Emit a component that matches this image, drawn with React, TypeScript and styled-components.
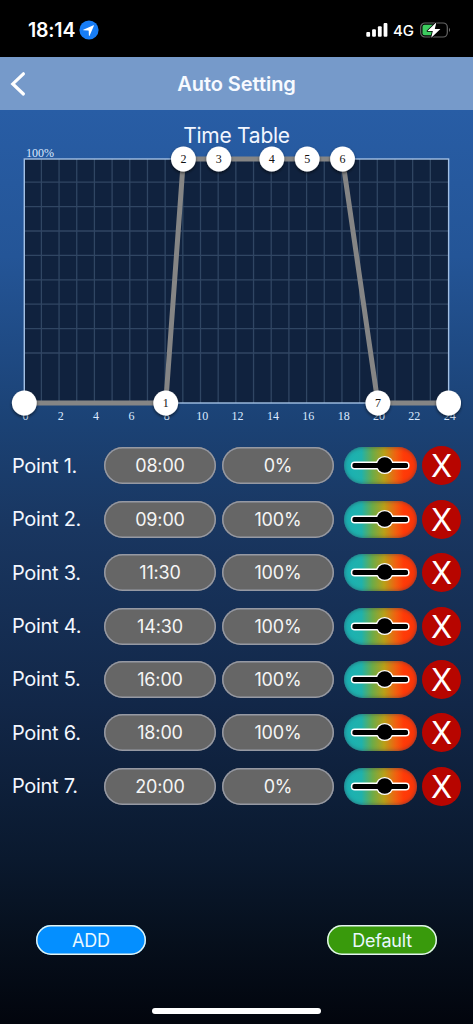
import React from "react";
import styled, { createGlobalStyle } from "styled-components";

const GlobalStyle = createGlobalStyle`
  * { box-sizing: border-box; }
  body { margin: 0; background: #000; }
`;

const Screen = styled.div`
  width: 473px;
  height: 1024px;
  overflow: hidden;
  display: flex;
  flex-direction: column;
  color: #fff;
  font-family: Inter, "Liberation Sans", sans-serif;
`;

const StatusBar = styled.header`
  height: 57px;
  flex: none;
  padding: 3px 22px 0 28px;
  display: flex;
  align-items: center;
  background: #000;
`;

const Clock = styled.span`
  width: 51px;
  font-size: 19.5px;
  font-weight: 600;
  letter-spacing: -0.2px;
  white-space: nowrap;
`;

const StatusIcons = styled.div`
  margin-left: auto;
  display: flex;
  align-items: center;
`;

const Network = styled.span`
  width: 27px;
  margin-left: 5px;
  font-size: 15px;
  font-weight: 500;
  letter-spacing: -0.1px;
`;

const NavBar = styled.nav`
  height: 53px;
  flex: none;
  padding: 0 10px;
  display: grid;
  grid-template-columns: 20px 1fr 20px;
  align-items: center;
  background: #769aca;
`;

const NavTitle = styled.h1`
  margin: 0;
  text-align: center;
  font-size: 20px;
  line-height: 24px;
  font-weight: 600;
  letter-spacing: -0.05px;
  color: #f7faff;
`;

const Content = styled.main`
  flex: 1;
  display: flex;
  flex-direction: column;
  background: linear-gradient(#285da5 0%, #245597 16%, #1b4275 34%, #193660 46%, #122748 65%, #0a192e 82%, #060f1c 91%, #02050d 100%);
`;

const ChartTitle = styled.h2`
  margin: 12px 0 0;
  height: 28px;
  text-align: center;
  font-size: 21px;
  line-height: 28px;
  font-weight: 400;
  letter-spacing: -0.25px;
  color: #f2f6ff;
`;

const Chart = styled.svg`
  display: block;
  flex: none;
  width: 473px;
  height: 281px;
  margin-top: -6px;
  overflow: visible;
  font-family: "Liberation Serif", serif;
`;

const PointList = styled.ul`
  margin: 0;
  padding: 14.2px 12px 0;
  list-style: none;
`;

const PointRow = styled.li`
  height: 53.4px;
  display: grid;
  grid-template-columns: 92px 112px 6px 112px 10px 73px 5px 39px;
  align-items: center;
`;

const PointName = styled.span`
  font-size: 20px;
  letter-spacing: -0.3px;
  color: #f3f7ff;
`;

const ValuePill = styled.button<{ $column: number }>`
  grid-column: ${(p) => p.$column};
  height: 37px;
  padding: 0;
  border: 0;
  box-shadow: inset 0 0 0 1.5px #9699a3;
  border-radius: 19px;
  background: #666;
  color: #f5f5f5;
  font: 400 18px/37px Inter, "Liberation Sans", sans-serif;
  letter-spacing: -0.15px;
`;

const ColorButton = styled.button`
  grid-column: 6;
  height: 37px;
  padding: 0;
  border: 0;
  border-radius: 19px;
  background: linear-gradient(90deg, #1ab1b5 0%, #20b2ab 24%, #6cab48 39%, #b9a018 55%, #f16010 71%, #ff3b08 82%, #fa3508 100%);
  box-shadow: inset 0 0 4px rgba(50, 60, 80, 0.65);
  svg { display: block; }
`;

const DeleteButton = styled.button`
  grid-column: 8;
  width: 39px;
  height: 39px;
  padding: 0;
  border: 0;
  border-radius: 50%;
  background: #b70500;
  color: #fff;
  font: 400 31px/39px Inter, "Liberation Sans", sans-serif;
  text-align: center;
`;

const Footer = styled.footer`
  margin-top: auto;
  padding: 0 36px;
  display: flex;
  justify-content: space-between;
`;

const ActionButton = styled.button<{ $tone: string }>`
  width: 110px;
  height: 30px;
  padding: 0;
  border: 0;
  box-shadow: inset 0 0 0 1.5px #e4f3f0;
  border-radius: 15px;
  background: ${(p) => p.$tone};
  color: #e9f8ff;
  font: 400 18px/31px Inter, "Liberation Sans", sans-serif;
  letter-spacing: -0.2px;
`;

const HomeIndicator = styled.div`
  width: 169px;
  height: 6.5px;
  margin: 52.5px auto 10px;
  flex: none;
  border-radius: 4px;
  background: #fff;
`;

const points = [
  { hour: 8, time: "08:00", level: 0 },
  { hour: 9, time: "09:00", level: 100 },
  { hour: 11, time: "11:30", level: 100 },
  { hour: 14, time: "14:30", level: 100 },
  { hour: 16, time: "16:00", level: 100 },
  { hour: 18, time: "18:00", level: 100 },
  { hour: 20, time: "20:00", level: 0 },
];

const LEFT = 24.3;
const TOP = 15;
const HEIGHT = 244;
const HOUR = 17.68;
const xAt = (hour: number) => LEFT + hour * HOUR;
const yAt = (level: number) => TOP + HEIGHT * (1 - level / 100);

function TimeChart() {
  const nodes = [
    { hour: 0, level: 0, label: "" },
    ...points.map((p, i) => ({ hour: p.hour, level: p.level, label: String(i + 1) })),
    { hour: 24, level: 0, label: "" },
  ];
  return (
    <Chart viewBox="0 0 473 281">
      <defs>
        <filter id="nodeShadow" x="-30%" y="-30%" width="160%" height="170%">
          <feDropShadow dx="0" dy="1.5" stdDeviation="1.8" floodColor="#000" floodOpacity="0.6" />
        </filter>
      </defs>
      <rect x={LEFT} y={TOP} width={HOUR * 24} height={HEIGHT} fill="#10223e" />
      <g stroke="#304663" strokeWidth="1.3">
        {Array.from({ length: 23 }, (_, i) => (
          <line key={i} x1={xAt(i + 1) - 0.6} x2={xAt(i + 1) - 0.6} y1={TOP} y2={TOP + HEIGHT} />
        ))}
        {Array.from({ length: 8 }, (_, i) => (
          <line key={i} x1={LEFT} x2={xAt(24)} y1={38.2 + i * 24.4} y2={38.2 + i * 24.4} />
        ))}
      </g>
      <rect x={LEFT} y={TOP} width={HOUR * 24} height={HEIGHT} fill="none" stroke="#a3c0e4" strokeWidth="1.4" />
      <g fill="#dceaff" fontSize="12">
        <text x="26" y="13">100%</text>
        {Array.from({ length: 13 }, (_, i) => (
          <text key={i} x={xAt(i * 2) + 1.1} y="276" textAnchor="middle">{i * 2}</text>
        ))}
      </g>
      <polyline
        points={nodes.map((n) => `${xAt(n.hour)},${yAt(n.level)}`).join(" ")}
        fill="none"
        stroke="#858585"
        strokeWidth="5"
      />
      {nodes.map((n) => (
        <g key={n.hour}>
          <circle cx={xAt(n.hour)} cy={yAt(n.level)} r="12.4" fill="#fff" filter="url(#nodeShadow)" />
          <text x={xAt(n.hour)} y={yAt(n.level) + 4} textAnchor="middle" fontSize="12" fill="#111">{n.label}</text>
        </g>
      ))}
    </Chart>
  );
}

function SliderIcon() {
  return (
    <svg width="73" height="37" viewBox="0 0 73 37">
      <rect x="6.8" y="14.5" width="58.8" height="8" rx="4" fill="#fff" />
      <circle cx="40.7" cy="18" r="9.1" fill="#fff" />
      <rect x="8.4" y="16" width="55.6" height="5" rx="1.8" fill="#000" />
      <circle cx="40.7" cy="18" r="7.7" fill="#000" />
    </svg>
  );
}

export default function App() {
  return (
    <>
      <GlobalStyle />
      <Screen>
        <StatusBar>
          <Clock>18:14</Clock>
          <svg width="20" height="20" viewBox="0 0 20 20">
            <circle cx="10" cy="10" r="9.6" fill="#177df6" />
            <path d="M4.3 9.8 14.5 5.2Q15.2 5 14.9 5.8L10.6 15.7Q10.1 16.3 9.9 15.5L9.7 10.8Q9.6 10.4 9.2 10.4L4.5 10.3Q3.8 10.1 4.3 9.8Z" fill="#fff" />
          </svg>
          <StatusIcons>
            <svg width="22" height="14" viewBox="0 0 22 14" fill="#fff">
              <rect x="0.3" y="9" width="3.8" height="4.8" rx="1" />
              <rect x="6.1" y="6.3" width="3.8" height="7.5" rx="1" />
              <rect x="11.9" y="3.3" width="3.8" height="10.5" rx="1" />
              <rect x="17.6" y="0" width="3.8" height="13.8" rx="1" />
            </svg>
            <Network>4G</Network>
            <svg width="31" height="18" viewBox="0 0 31 18">
              <rect x="0.7" y="2" width="26.6" height="14" rx="4.2" fill="none" stroke="#666" strokeWidth="1.2" />
              <path d="M29 6.8Q30.9 9 29 11.2Z" fill="#777" />
              <path d="M4.5 3.8H13V14.2H4.5Q2.5 14.2 2.5 12.2V5.8Q2.5 3.8 4.5 3.8Z" fill="#3dcc5f" />
              <path d="M16.4 1.2 7.4 10H12.8L11.2 16.8 20.4 7.9H14.8Z" fill="#fff" stroke="#000" strokeWidth="1.6" paintOrder="stroke" strokeLinejoin="round" />
            </svg>
          </StatusIcons>
        </StatusBar>
        <NavBar>
          <svg width="18" height="26" viewBox="0 0 18 26">
            <path d="M13.4 2.8 2.8 12.9 13.4 23" fill="none" stroke="#fff" strokeWidth="3.2" strokeLinecap="round" strokeLinejoin="miter" />
          </svg>
          <NavTitle>Auto Setting</NavTitle>
        </NavBar>
        <Content>
          <ChartTitle>Time Table</ChartTitle>
          <TimeChart />
          <PointList>
            {points.map((p, i) => (
              <PointRow key={p.time}>
                <PointName>Point {i + 1}.</PointName>
                <ValuePill $column={2}>{p.time}</ValuePill>
                <ValuePill $column={4}>{p.level}%</ValuePill>
                <ColorButton aria-label="Color"><SliderIcon /></ColorButton>
                <DeleteButton>X</DeleteButton>
              </PointRow>
            ))}
          </PointList>
          <Footer>
            <ActionButton $tone="#048fff">ADD</ActionButton>
            <ActionButton $tone="#399a0c">Default</ActionButton>
          </Footer>
          <HomeIndicator />
        </Content>
      </Screen>
    </>
  );
}
